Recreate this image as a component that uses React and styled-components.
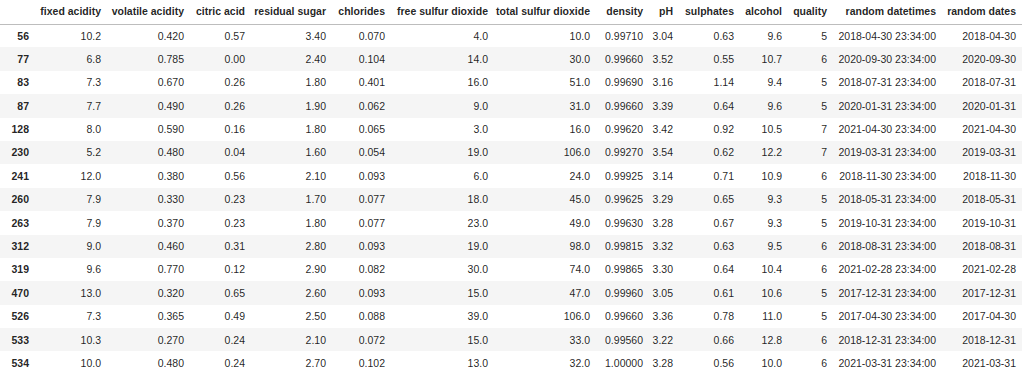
import React from 'react'
import styled, { createGlobalStyle } from 'styled-components'

const GlobalStyle = createGlobalStyle`
  html, body {
    margin: 0;
    padding: 0;
    background: #fff;
  }
  body {
    font-family: "Liberation Sans", Arial, sans-serif;
    overflow: hidden;
  }
`

const columns = [
  { label: '', width: 35 },
  { label: 'fixed acidity', width: 72 },
  { label: 'volatile acidity', width: 83 },
  { label: 'citric acid', width: 61 },
  { label: 'residual sugar', width: 81 },
  { label: 'chlorides', width: 59 },
  { label: 'free sulfur dioxide', width: 103 },
  { label: 'total sulfur dioxide', width: 102 },
  { label: 'density', width: 53 },
  { label: 'pH', width: 30 },
  { label: 'sulphates', width: 61 },
  { label: 'alcohol', width: 48 },
  { label: 'quality', width: 45 },
  { label: 'random datetimes', width: 109 },
  { label: 'random dates', width: 80 },
]

const rows = [
  ['56', '10.2', '0.420', '0.57', '3.40', '0.070', '4.0', '10.0', '0.99710', '3.04', '0.63', '9.6', '5', '2018-04-30'],
  ['77', '6.8', '0.785', '0.00', '2.40', '0.104', '14.0', '30.0', '0.99660', '3.52', '0.55', '10.7', '6', '2020-09-30'],
  ['83', '7.3', '0.670', '0.26', '1.80', '0.401', '16.0', '51.0', '0.99690', '3.16', '1.14', '9.4', '5', '2018-07-31'],
  ['87', '7.7', '0.490', '0.26', '1.90', '0.062', '9.0', '31.0', '0.99660', '3.39', '0.64', '9.6', '5', '2020-01-31'],
  ['128', '8.0', '0.590', '0.16', '1.80', '0.065', '3.0', '16.0', '0.99620', '3.42', '0.92', '10.5', '7', '2021-04-30'],
  ['230', '5.2', '0.480', '0.04', '1.60', '0.054', '19.0', '106.0', '0.99270', '3.54', '0.62', '12.2', '7', '2019-03-31'],
  ['241', '12.0', '0.380', '0.56', '2.10', '0.093', '6.0', '24.0', '0.99925', '3.14', '0.71', '10.9', '6', '2018-11-30'],
  ['260', '7.9', '0.330', '0.23', '1.70', '0.077', '18.0', '45.0', '0.99625', '3.29', '0.65', '9.3', '5', '2018-05-31'],
  ['263', '7.9', '0.370', '0.23', '1.80', '0.077', '23.0', '49.0', '0.99630', '3.28', '0.67', '9.3', '5', '2019-10-31'],
  ['312', '9.0', '0.460', '0.31', '2.80', '0.093', '19.0', '98.0', '0.99815', '3.32', '0.63', '9.5', '6', '2018-08-31'],
  ['319', '9.6', '0.770', '0.12', '2.90', '0.082', '30.0', '74.0', '0.99865', '3.30', '0.64', '10.4', '6', '2021-02-28'],
  ['470', '13.0', '0.320', '0.65', '2.60', '0.093', '15.0', '47.0', '0.99960', '3.05', '0.61', '10.6', '5', '2017-12-31'],
  ['526', '7.3', '0.365', '0.49', '2.50', '0.088', '39.0', '106.0', '0.99660', '3.36', '0.78', '11.0', '5', '2017-04-30'],
  ['533', '10.3', '0.270', '0.24', '2.10', '0.072', '15.0', '33.0', '0.99560', '3.22', '0.66', '12.8', '6', '2018-12-31'],
  ['534', '10.0', '0.480', '0.24', '2.70', '0.102', '13.0', '32.0', '1.00000', '3.28', '0.56', '10.0', '6', '2021-03-31'],
]

const App = () => (
  <Wrapper>
    <GlobalStyle />
    <Table>
      <colgroup>
        {columns.map((c, i) => (
          <Col key={i} $width={c.width} />
        ))}
      </colgroup>
      <thead>
        <HeadRow>
          {columns.map((c, i) => (
            <HeadCell key={i}>{c.label}</HeadCell>
          ))}
        </HeadRow>
      </thead>
      <tbody>
        {rows.map((r) => {
          const [idx, ...vals] = r
          const date = vals[vals.length - 1]
          return (
            <Row key={idx}>
              <IndexCell>{idx}</IndexCell>
              {vals.slice(0, -1).map((v, j) => (
                <Cell key={j}>{v}</Cell>
              ))}
              <Cell>{date} 23:34:00</Cell>
              <Cell>{date}</Cell>
            </Row>
          )
        })}
      </tbody>
    </Table>
  </Wrapper>
)

export default App

const Wrapper = styled.div`
  width: 1024px;
  height: 375px;
  overflow: hidden;
`

const Table = styled.table`
  width: 1022px;
  table-layout: fixed;
  border-collapse: collapse;
  border-spacing: 0;
  font-size: 10.5px;
  line-height: 1;
  color: rgba(0, 0, 0, 0.87);
`

const Col = styled.col`
  width: ${(p) => p.$width}px;
`

const HeadRow = styled.tr`
  height: 24px;
  border-bottom: 1px solid #bdbdbd;
`

const HeadCell = styled.th`
  padding: 0 6px 1px 0;
  text-align: right;
  vertical-align: middle;
  font-weight: bold;
  white-space: nowrap;
`

const Row = styled.tr`
  height: 23.4px;

  &:nth-child(even) {
    background: #f5f5f5;
  }
`

const IndexCell = styled.th`
  padding: 0 6px 0 0;
  text-align: right;
  vertical-align: middle;
  font-weight: bold;
  white-space: nowrap;
`

const Cell = styled.td`
  padding: 0 6px 0 0;
  text-align: right;
  vertical-align: middle;
  white-space: nowrap;
`
